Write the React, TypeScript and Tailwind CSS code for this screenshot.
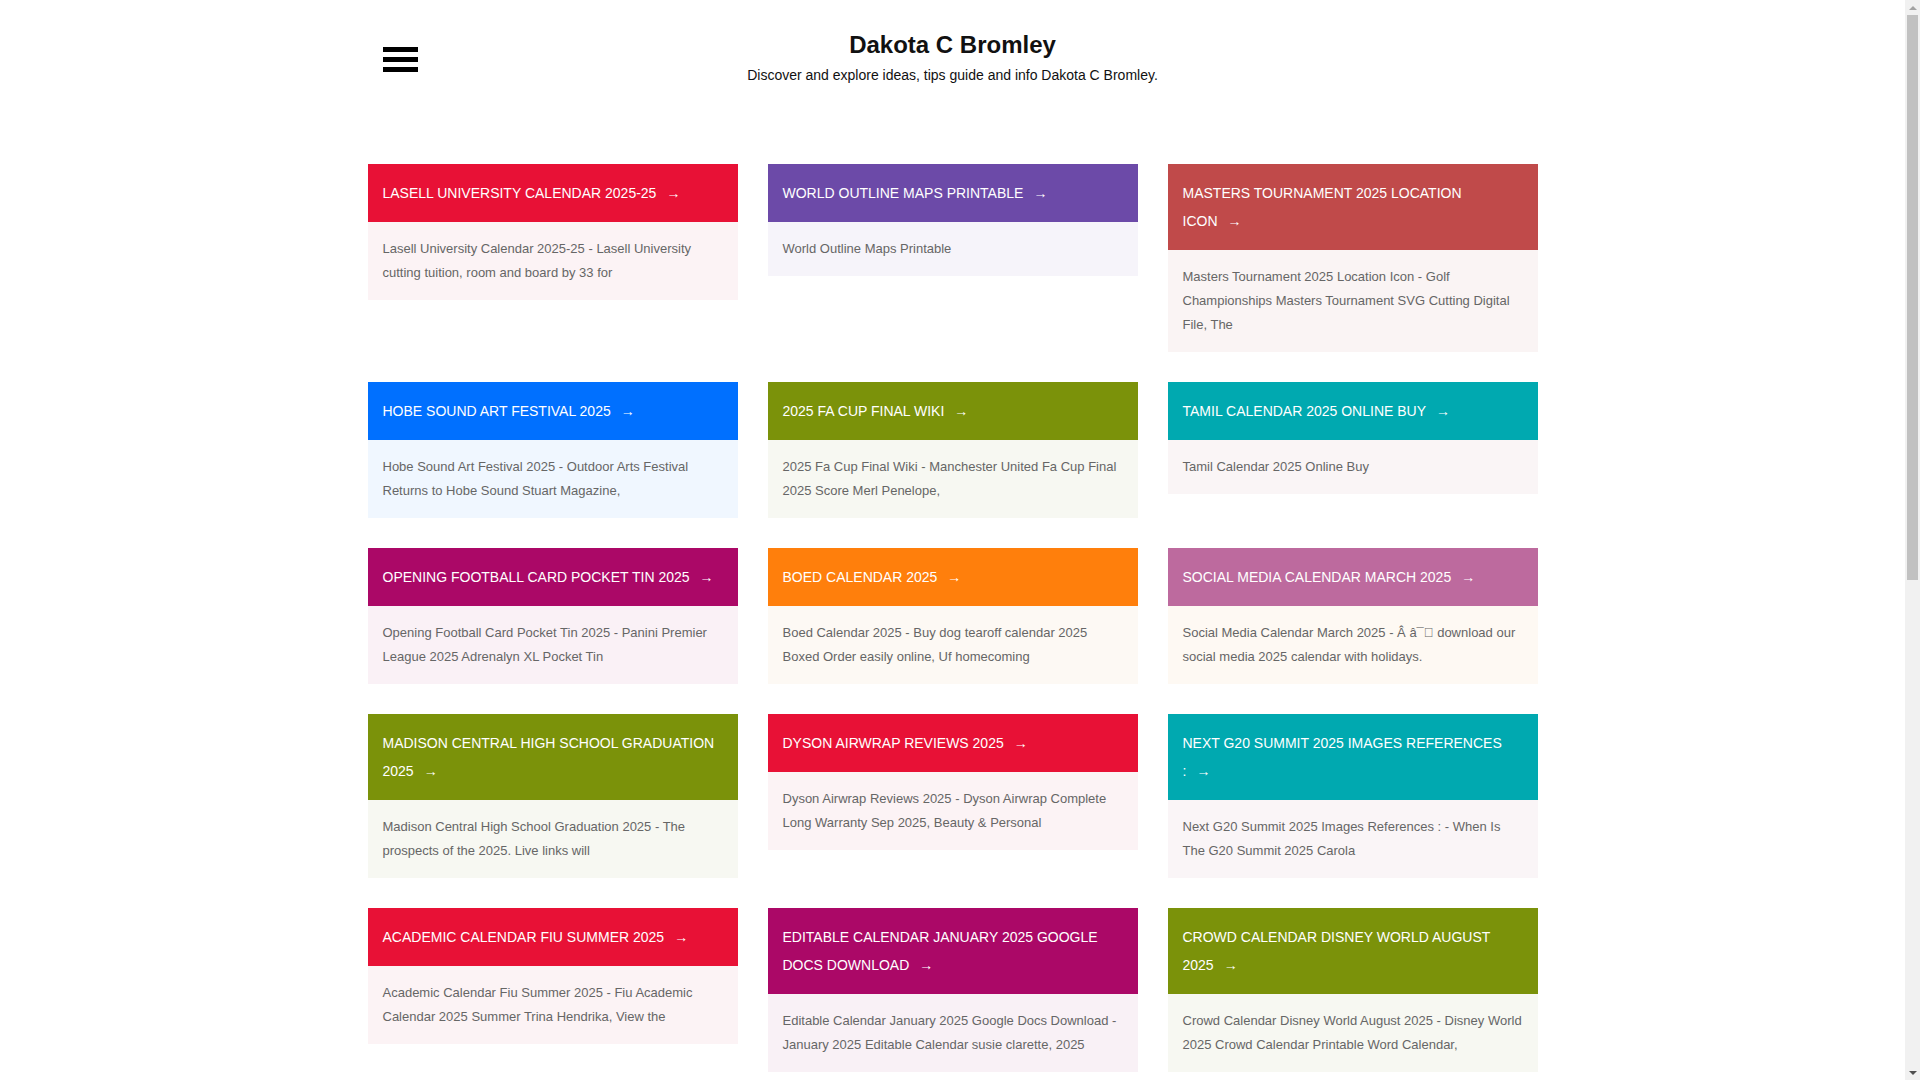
import React from 'react';

interface Post {
  title: string;
  excerpt: string;
  head: string;
  body: string;
}

const posts: Post[] = [
  {
    title: 'LASELL UNIVERSITY CALENDAR 2025-25',
    excerpt: 'Lasell University Calendar 2025-25 - Lasell University cutting tuition, room and board by 33 for',
    head: 'bg-[#e81136]',
    body: 'bg-[#fcf3f5]',
  },
  {
    title: 'WORLD OUTLINE MAPS PRINTABLE',
    excerpt: 'World Outline Maps Printable',
    head: 'bg-[#6c4aa8]',
    body: 'bg-[#f6f4fa]',
  },
  {
    title: 'MASTERS TOURNAMENT 2025 LOCATION ICON',
    excerpt: 'Masters Tournament 2025 Location Icon - Golf Championships Masters Tournament SVG Cutting Digital File, The',
    head: 'bg-[#c04a4a]',
    body: 'bg-[#faf4f4]',
  },
  {
    title: 'HOBE SOUND ART FESTIVAL 2025',
    excerpt: 'Hobe Sound Art Festival 2025 - Outdoor Arts Festival Returns to Hobe Sound Stuart Magazine,',
    head: 'bg-[#0070ff]',
    body: 'bg-[#f0f7ff]',
  },
  {
    title: '2025 FA CUP FINAL WIKI',
    excerpt: '2025 Fa Cup Final Wiki - Manchester United Fa Cup Final 2025 Score Merl Penelope,',
    head: 'bg-[#7b920a]',
    body: 'bg-[#f7f8f2]',
  },
  {
    title: 'TAMIL CALENDAR 2025 ONLINE BUY',
    excerpt: 'Tamil Calendar 2025 Online Buy',
    head: 'bg-[#00a9b0]',
    body: 'bg-[#faf5f6]',
  },
  {
    title: 'OPENING FOOTBALL CARD POCKET TIN 2025',
    excerpt: 'Opening Football Card Pocket Tin 2025 - Panini Premier League 2025 Adrenalyn XL Pocket Tin',
    head: 'bg-[#ab0867]',
    body: 'bg-[#faf1f6]',
  },
  {
    title: 'BOED CALENDAR 2025',
    excerpt: 'Boed Calendar 2025 - Buy dog tearoff calendar 2025 Boxed Order easily online, Uf homecoming',
    head: 'bg-[#ff7f0c]',
    body: 'bg-[#fdf9f4]',
  },
  {
    title: 'SOCIAL MEDIA CALENDAR MARCH 2025',
    excerpt: 'Social Media Calendar March 2025 - \u00c2 \u00e2\u00af\ue000 download our social media 2025 calendar with holidays.',
    head: 'bg-[#bd6a9e]',
    body: 'bg-[#fef9f3]',
  },
  {
    title: 'MADISON CENTRAL HIGH SCHOOL GRADUATION 2025',
    excerpt: 'Madison Central High School Graduation 2025 - The prospects of the 2025. Live links will',
    head: 'bg-[#7b920a]',
    body: 'bg-[#f7f8f2]',
  },
  {
    title: 'DYSON AIRWRAP REVIEWS 2025',
    excerpt: 'Dyson Airwrap Reviews 2025 - Dyson Airwrap Complete Long Warranty Sep 2025, Beauty & Personal',
    head: 'bg-[#e81136]',
    body: 'bg-[#fcf3f5]',
  },
  {
    title: 'NEXT G20 SUMMIT 2025 IMAGES REFERENCES :',
    excerpt: 'Next G20 Summit 2025 Images References : - When Is The G20 Summit 2025 Carola',
    head: 'bg-[#00a9b0]',
    body: 'bg-[#faf5f7]',
  },
  {
    title: 'ACADEMIC CALENDAR FIU SUMMER 2025',
    excerpt: 'Academic Calendar Fiu Summer 2025 - Fiu Academic Calendar 2025 Summer Trina Hendrika, View the',
    head: 'bg-[#e81136]',
    body: 'bg-[#fcf3f5]',
  },
  {
    title: 'EDITABLE CALENDAR JANUARY 2025 GOOGLE DOCS DOWNLOAD',
    excerpt: 'Editable Calendar January 2025 Google Docs Download - January 2025 Editable Calendar susie clarette, 2025',
    head: 'bg-[#ab0867]',
    body: 'bg-[#f9f1f6]',
  },
  {
    title: 'CROWD CALENDAR DISNEY WORLD AUGUST 2025',
    excerpt: 'Crowd Calendar Disney World August 2025 - Disney World 2025 Crowd Calendar Printable Word Calendar,',
    head: 'bg-[#7b920a]',
    body: 'bg-[#f7f8f2]',
  },
];

const PostCard: React.FC<{ post: Post }> = ({ post }) => (
  <div>
    <a href="#" className={`block ${post.head} pl-[15px] pr-[18px] py-[15px] text-[14px] leading-[28px] text-white`}>
      {post.title}
      <span className="ml-[10px]">→</span>
    </a>
    <div className={`${post.body} px-[15px] py-[15px] text-[13px] leading-[24px] text-[#666666]`}>
      {post.excerpt}
    </div>
  </div>
);

// the reference was shot with a classic scrollbar taking 15px on the right
const Scrollbar: React.FC = () => (
  <aside className="sticky top-0 flex h-[1080px] w-[15px] shrink-0 flex-col bg-[#f1f1f1]">
    <div className="flex h-[15px] items-center justify-center">
      <span className="block h-0 w-0 border-x-[4px] border-b-[4px] border-x-transparent border-b-[#a3a3a3]" />
    </div>
    <div className="px-[2px]">
      <div className="h-[565px] bg-[#c1c1c1]" />
    </div>
    <div className="flex-1" />
    <div className="flex h-[15px] items-center justify-center">
      <span className="block h-0 w-0 border-x-[4px] border-t-[4px] border-x-transparent border-t-[#505050]" />
    </div>
  </aside>
);

export default function App() {
  return (
    <div className="flex bg-white font-['Liberation_Sans',Arial,sans-serif]">
      <div className="w-[1905px] shrink-0">
        <div className="mx-auto w-[1170px]">
          <header className="grid grid-cols-[1fr_auto_1fr] pt-[30px]">
            <button className="mt-[17px] ml-[15px] flex h-[25px] w-[35px] flex-col justify-between self-start">
              <span className="block h-[5px] w-[35px] bg-black" />
              <span className="block h-[5px] w-[35px] bg-black" />
              <span className="block h-[5px] w-[35px] bg-black" />
            </button>
            <div className="text-center">
              <h1 className="text-[24px] font-bold leading-[30px] text-[#111111]">Dakota C Bromley</h1>
              <p className="mt-[5px] text-[14px] leading-[20px] text-[#111111]">
                Discover and explore ideas, tips guide and info Dakota C Bromley.
              </p>
            </div>
            <div />
          </header>

          <main className="mt-[79px] grid grid-cols-3 items-start gap-[30px] pb-[120px]">
            {posts.map((post, i) => (
              <PostCard key={i} post={post} />
            ))}
          </main>
        </div>
      </div>
      <Scrollbar />
    </div>
  );
}
